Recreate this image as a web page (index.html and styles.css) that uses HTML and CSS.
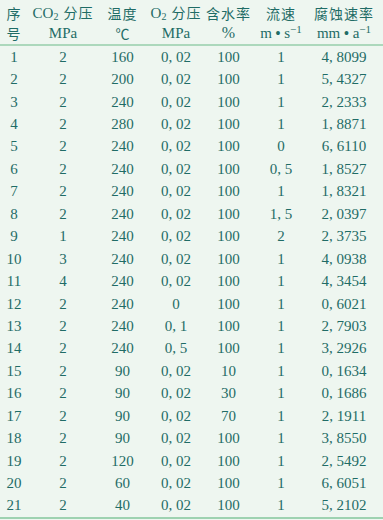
FILE: index.html
```html
<!DOCTYPE html>
<html lang="zh">
<head>
<meta charset="utf-8">
<link rel="stylesheet" href="styles.css">
</head>
<body>
<div class="table">
  <div class="head">
    <div class="row hrow">
      <div class="zh">序</div>
      <div><span class="lat">CO<sub>2</sub></span><span class="zh gap">分压</span></div>
      <div class="zh">温度</div>
      <div><span class="lat">O<sub>2</sub></span><span class="zh gap">分压</span></div>
      <div class="zh">含水率</div>
      <div class="zh">流速</div>
      <div class="zh">腐蚀速率</div>
    </div>
    <div class="row hrow">
      <div class="zh">号</div>
      <div class="lat">MPa</div>
      <div class="deg">℃</div>
      <div class="lat">MPa</div>
      <div class="lat pct">%</div>
      <div class="lat">m <b class="dot">•</b> s<sup>−1</sup></div>
      <div class="lat">mm <b class="dot">•</b> a<sup>−1</sup></div>
    </div>
  </div>
  <div class="body">
    <div class="row"><div>1</div><div>2</div><div>160</div><div>0, 02</div><div>100</div><div>1</div><div>4, 8099</div></div>
    <div class="row"><div>2</div><div>2</div><div>200</div><div>0, 02</div><div>100</div><div>1</div><div>5, 4327</div></div>
    <div class="row"><div>3</div><div>2</div><div>240</div><div>0, 02</div><div>100</div><div>1</div><div>2, 2333</div></div>
    <div class="row"><div>4</div><div>2</div><div>280</div><div>0, 02</div><div>100</div><div>1</div><div>1, 8871</div></div>
    <div class="row"><div>5</div><div>2</div><div>240</div><div>0, 02</div><div>100</div><div>0</div><div>6, 6110</div></div>
    <div class="row"><div>6</div><div>2</div><div>240</div><div>0, 02</div><div>100</div><div>0, 5</div><div>1, 8527</div></div>
    <div class="row"><div>7</div><div>2</div><div>240</div><div>0, 02</div><div>100</div><div>1</div><div>1, 8321</div></div>
    <div class="row"><div>8</div><div>2</div><div>240</div><div>0, 02</div><div>100</div><div>1, 5</div><div>2, 0397</div></div>
    <div class="row"><div>9</div><div>1</div><div>240</div><div>0, 02</div><div>100</div><div>2</div><div>2, 3735</div></div>
    <div class="row"><div>10</div><div>3</div><div>240</div><div>0, 02</div><div>100</div><div>1</div><div>4, 0938</div></div>
    <div class="row"><div>11</div><div>4</div><div>240</div><div>0, 02</div><div>100</div><div>1</div><div>4, 3454</div></div>
    <div class="row"><div>12</div><div>2</div><div>240</div><div>0</div><div>100</div><div>1</div><div>0, 6021</div></div>
    <div class="row"><div>13</div><div>2</div><div>240</div><div>0, 1</div><div>100</div><div>1</div><div>2, 7903</div></div>
    <div class="row"><div>14</div><div>2</div><div>240</div><div>0, 5</div><div>100</div><div>1</div><div>3, 2926</div></div>
    <div class="row"><div>15</div><div>2</div><div>90</div><div>0, 02</div><div>10</div><div>1</div><div>0, 1634</div></div>
    <div class="row"><div>16</div><div>2</div><div>90</div><div>0, 02</div><div>30</div><div>1</div><div>0, 1686</div></div>
    <div class="row"><div>17</div><div>2</div><div>90</div><div>0, 02</div><div>70</div><div>1</div><div>2, 1911</div></div>
    <div class="row"><div>18</div><div>2</div><div>90</div><div>0, 02</div><div>100</div><div>1</div><div>3, 8550</div></div>
    <div class="row"><div>19</div><div>2</div><div>120</div><div>0, 02</div><div>100</div><div>1</div><div>2, 5492</div></div>
    <div class="row"><div>20</div><div>2</div><div>60</div><div>0, 02</div><div>100</div><div>1</div><div>6, 6051</div></div>
    <div class="row"><div>21</div><div>2</div><div>40</div><div>0, 02</div><div>100</div><div>1</div><div>5, 2102</div></div>
  </div>
</div>
</body>
</html>
```
FILE: styles.css
```css
html, body {
  margin: 0;
  padding: 0;
  background: #eef6f0;
}
.table {
  width: 383px;
  height: 520px;
  background: #eef6f0;
  color: #1f6c66;
  font-family: "Liberation Serif", "DejaVu Serif", serif;
  font-size: 15px;
  box-sizing: border-box;
}
.head {
  padding-top: 3px;
  border-bottom: 2px solid #acd8bc;
}
.row {
  display: grid;
  grid-template-columns: 28px 70px 49px 58px 47px 58px 68px;
  height: 22.45px;
  align-items: center;
  text-align: center;
  white-space: nowrap;
  line-height: 1;
}
.hrow {
  height: 20px;
}
.hrow:last-child {
  height: 20px;
  padding-bottom: 1px;
}
.body {
  border-bottom: 2px solid #9ed2b1;
}
.zh {
  font-family: "Noto Sans CJK SC", sans-serif;
  font-size: 14px;
  letter-spacing: 1px;
  font-weight: 400;
}
.gap {
  margin-left: 5px;
}
.lat {
  font-family: "Liberation Serif", "DejaVu Serif", serif;
  font-size: 15px;
}
.deg {
  font-family: "Noto Sans CJK SC", sans-serif;
  font-size: 14px;
}
.pct {
  font-size: 16px;
}
sub {
  font-size: 10px;
  vertical-align: -2px;
  line-height: 0;
}
sup {
  font-size: 11px;
  vertical-align: 5px;
  line-height: 0;
}
.dot {
  font-size: 14px;
  font-weight: bold;
  vertical-align: 0;
}
```
